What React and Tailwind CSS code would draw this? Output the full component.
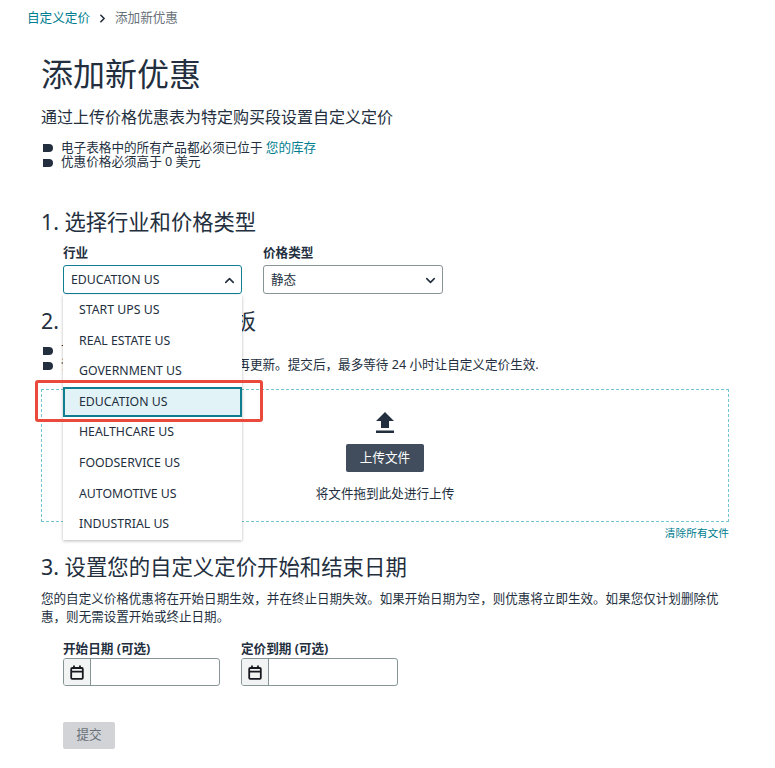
import React from 'react';
import { ChevronDown, ChevronRight, ChevronUp } from 'lucide-react';

const industries = ['START UPS US', 'REAL ESTATE US', 'GOVERNMENT US', 'EDUCATION US', 'HEALTHCARE US', 'FOODSERVICE US', 'AUTOMOTIVE US', 'INDUSTRIAL US'];

function Bullet({ children }) {
  return (
    <li className="flex items-center h-[14.5px]">
      <span className="w-[10px] h-[8px] ml-px mr-[8px] shrink-0 bg-[#232f3e] rounded-l-[2px] rounded-r-full" />
      <span className="whitespace-nowrap">{children}</span>
    </li>
  );
}

function CalendarIcon() {
  return (
    <svg width="14" height="15" viewBox="0 0 14 15" fill="none" stroke="#16191f" strokeWidth="1.8">
      <rect x="1.2" y="3" width="11.6" height="10.8" rx="1" />
      <path d="M1.2 6.6 H12.8 M4 0.6 V3 M10 0.6 V3" />
    </svg>
  );
}

function DateField({ label }) {
  return (
    <div className="w-[157px]">
      <div className="h-[17px] leading-[16px] text-[12.6px] font-bold">{label}</div>
      <div className="flex h-[28px] border border-[#879596] rounded-[3px] bg-white overflow-hidden">
        <div className="w-[27px] flex items-center justify-center bg-[#f2f3f3] border-r border-[#879596]">
          <CalendarIcon />
        </div>
      </div>
    </div>
  );
}

export default function App() {
  return (
    <div className="relative w-[775px] h-[768px] overflow-hidden bg-white text-[#232f3e] text-[12.6px] font-['Noto_Sans','Noto_Sans_CJK_SC',sans-serif]">
      <nav className="flex items-center h-[16px] mt-[10px] ml-[27px] absolute top-0 left-0">
        <a className="text-[#007d8f]">自定义定价</a>
        <ChevronRight size={13} strokeWidth={3} className="mx-[6px] text-[#232f3e]" />
        <span className="text-[#687078]">添加新优惠</span>
      </nav>

      <main className="pl-[41px] pr-[46px] pt-[52px]">
        <h1 className="text-[32px] leading-[44px] font-normal">添加新优惠</h1>
        <p className="mt-[9px] text-[16px] leading-[24px]">通过上传价格优惠表为特定购买段设置自定义定价</p>
        <ul className="mt-[12px] ml-px">
          <Bullet>电子表格中的所有产品都必须已位于 <a className="text-[#007d8f]">您的库存</a></Bullet>
          <Bullet>优惠价格必须高于 0 美元</Bullet>
        </ul>

        <h2 className="mt-[38px] text-[21.3px] leading-[28px] font-normal">1. 选择行业和价格类型</h2>
        <div className="relative flex gap-[21px] ml-[22px] mt-[9px]">
          <div className="w-[179px]">
            <div className="h-[16px] leading-[16px] font-bold mb-[4px]">行业</div>
            <div className="flex items-center justify-between h-[29px] pl-[7px] pr-[4px] pt-px border border-[#0f7e91] rounded-[3px] bg-white text-[12.3px]">
              <span>EDUCATION US</span>
              <ChevronUp size={15} strokeWidth={2.5} />
            </div>
          </div>
          <div className="w-[180px]">
            <div className="h-[16px] leading-[16px] font-bold mb-[4px]">价格类型</div>
            <div className="flex items-center justify-between h-[29px] pl-[7px] pr-[4px] pt-px border border-[#879596] rounded-[3px] bg-white">
              <span>静态</span>
              <ChevronDown size={15} strokeWidth={2.5} />
            </div>
          </div>

          <ul className="absolute z-10 left-0 top-[50px] w-[179px] h-[245px] bg-white shadow-[0_1px_3px_rgba(0,0,0,0.28)] text-[12.3px]">
            {industries.map(name => (
              <li
                key={name}
                className={name === 'EDUCATION US'
                  ? 'flex items-center h-[30.6px] pl-[14px] border-2 border-[#0f7e91] bg-[#e2f3f8]'
                  : 'flex items-center h-[30.6px] pl-[16px]'}
              >
                {name}
              </li>
            ))}
          </ul>
        </div>

        <h2 className="mt-[13px] text-[21.3px] leading-[28px] font-normal">2. 下载并填写价格模板</h2>
        <ul className="mt-[9px] ml-px">
          <Bullet>下载模板并填写您的价格</Bullet>
          <Bullet>请使用最新模板填写价格后请勿再更新。提交后，最多等待 24 小时让自定义定价生效.</Bullet>
        </ul>

        <div className="mt-[16px] h-[133px] border border-dashed border-[#6fc5d1] flex flex-col items-center">
          <svg width="20" height="22" viewBox="0 0 20 22" className="mt-[22px] shrink-0" fill="#232f3e">
            <path d="M10 0 L19 9 H14 V16 H6 V9 H1 Z" />
            <rect x="1" y="18.5" width="18" height="2.5" />
          </svg>
          <button className="mt-[10px] w-[78px] h-[28px] rounded-[2px] bg-[#414d5c] text-white text-[12.6px]">上传文件</button>
          <div className="mt-[14px] leading-[16px]">将文件拖到此处进行上传</div>
        </div>
        <div className="mt-[3px] h-[16px] leading-[16px] text-right text-[10.7px] text-[#007d8f]">清除所有文件</div>

        <h2 className="mt-[12px] text-[21.4px] leading-[28px] font-normal">3. 设置您的自定义定价开始和结束日期</h2>
        <p className="mt-[9px] text-[12.55px] leading-[18px]">您的自定义价格优惠将在开始日期生效，并在终止日期失效。如果开始日期为空，则优惠将立即生效。如果您仅计划删除优惠，则无需设置开始或终止日期。</p>

        <div className="flex gap-[21px] ml-[22px] mt-[15px]">
          <DateField label="开始日期 (可选)" />
          <DateField label="定价到期 (可选)" />
        </div>

        <button className="block ml-[22px] mt-[36px] w-[52px] h-[27px] rounded-[2px] bg-[#d1d3d7] text-[#687078] text-[12.6px]">提交</button>
      </main>

      {/* red annotation drawn over the screenshot */}
      <div className="absolute z-20 left-[35px] top-[380px] w-[228px] h-[42px] border-[3px] border-[#ea4a3c] rounded-[3px]" />
    </div>
  );
}
